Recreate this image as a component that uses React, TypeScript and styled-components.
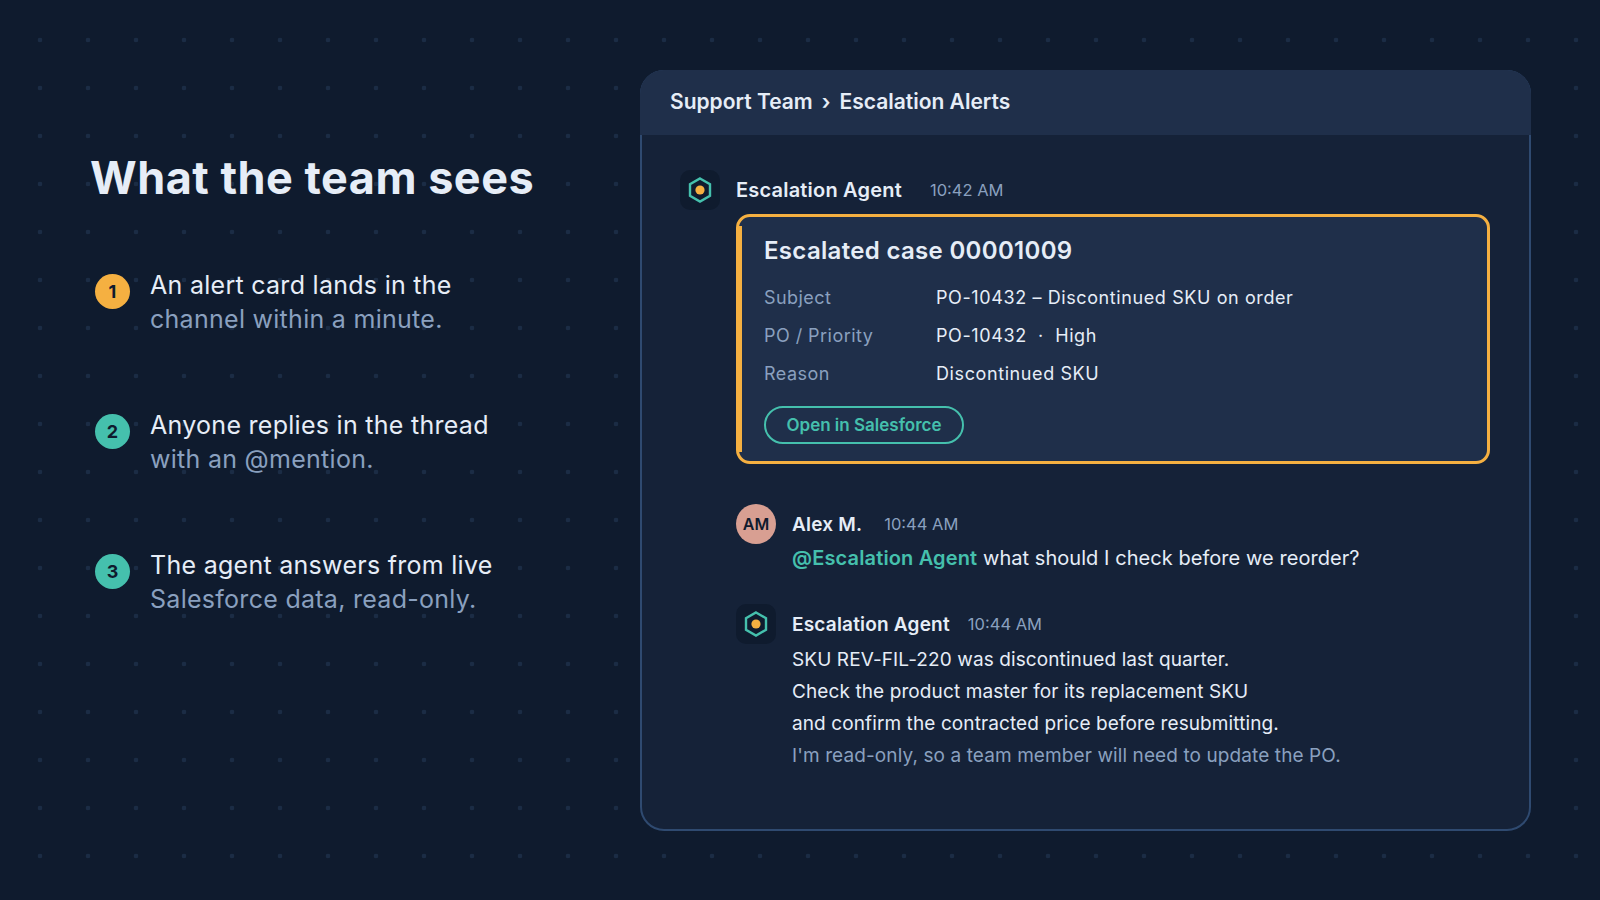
import React from "react";
import styled, { createGlobalStyle } from "styled-components";

const GlobalStyle = createGlobalStyle`
    html, body {
        margin: 0;
        padding: 0;
        background: #0f1b2e;
    }
    body {
        font-family: "Inter", "Noto Sans", sans-serif;
    }
`;

const Page = styled.div`
    width: 1600px;
    height: 900px;
    box-sizing: border-box;
    padding: 70px 69px 69px 0;
    display: flex;
    overflow: hidden;
    background-color: #0f1b2e;
    background-image: radial-gradient(circle at 24px 24px, #1b2c45 2px, transparent 2.6px);
    background-size: 48px 48px;
    background-position: 16px 16px;
`;

const Intro = styled.section`
    width: 640px;
    flex-shrink: 0;
    box-sizing: border-box;
    padding: 79px 0 0 90px;
`;

const Heading = styled.h1`
    margin: 0 0 61px;
    font-size: 45px;
    line-height: 58px;
    font-weight: 700;
    color: #e6edf7;
    letter-spacing: 0.5px;
`;

const Steps = styled.ol`
    list-style: none;
    margin: 0;
    padding: 0;
    display: flex;
    flex-direction: column;
    gap: 72px;
`;

const Step = styled.li`
    display: flex;
    align-items: flex-start;
    gap: 20px;
`;

const Badge = styled.span<{ $color: string }>`
    width: 35px;
    height: 35px;
    margin: 6px 0 0 5px;
    flex-shrink: 0;
    border-radius: 50%;
    background: ${(p) => p.$color};
    color: #0f1b2e;
    font-size: 18px;
    font-weight: 700;
    display: flex;
    align-items: center;
    justify-content: center;
`;

const StepText = styled.p`
    margin: 0;
    font-size: 25px;
    line-height: 34px;
    color: #e6edf7;
    letter-spacing: 0.28px;
`;

const Muted = styled.span`
    display: block;
    color: #8aa0bf;
`;

const Panel = styled.section`
    flex: 1;
    box-sizing: border-box;
    background: #152238;
    border: 2px solid #2f4a70;
    border-radius: 24px;
`;

const PanelHeader = styled.header`
    height: 65px;
    margin: -2px -2px 0;
    padding: 0 30px 2px;
    box-sizing: border-box;
    display: flex;
    align-items: center;
    gap: 9px;
    background: #1f2f4a;
    border-radius: 24px 24px 0 0;
    color: #e6edf7;
    font-size: 21px;
    font-weight: 600;
`;

const PanelBody = styled.div`
    padding: 35px 39px 0 38px;
    display: flex;
    flex-direction: column;
`;

const Message = styled.article<{ $top?: number; $indent?: number }>`
    display: flex;
    gap: 16px;
    margin-top: ${(p) => p.$top || 0}px;
    margin-left: ${(p) => p.$indent || 0}px;
`;

const AgentAvatar = styled.div`
    width: 40px;
    height: 40px;
    flex-shrink: 0;
    border-radius: 10px;
    background: #0f1b2e;
    display: flex;
    align-items: center;
    justify-content: center;
`;

const PersonAvatar = styled.div`
    width: 40px;
    height: 40px;
    flex-shrink: 0;
    border-radius: 50%;
    background: #d89f92;
    color: #0f1b2e;
    font-size: 16px;
    font-weight: 600;
    display: flex;
    align-items: center;
    justify-content: center;
`;

const MessageMain = styled.div`
    flex: 1;
    min-width: 0;
`;

const MetaRow = styled.div<{ $gap: number }>`
    height: 40px;
    display: flex;
    align-items: center;
    gap: ${(p) => p.$gap}px;
`;

const Name = styled.span<{ $large?: boolean }>`
    font-size: ${(p) => (p.$large ? 20 : 19)}px;
    font-weight: 600;
    color: #e6edf7;
    letter-spacing: 0.2px;
`;

const Time = styled.span`
    font-size: 16.5px;
    color: #8aa0bf;
`;

const AlertCard = styled.div`
    position: relative;
    margin-top: 4px;
    height: 250px;
    box-sizing: border-box;
    padding: 17px 25px;
    background: #1f2f4a;
    border: 3px solid #f5b041;
    border-radius: 14px;

    &::before {
        content: "";
        position: absolute;
        left: 0;
        top: 9px;
        bottom: 9px;
        width: 3px;
        background: #f5b041;
    }
`;

const CardTitle = styled.h2`
    margin: 0 0 10px;
    font-size: 24px;
    line-height: 34px;
    font-weight: 600;
    color: #e6edf7;
    letter-spacing: 0.32px;
`;

const FactRow = styled.div`
    height: 38px;
    display: flex;
    align-items: center;
    font-size: 18px;
`;

const FactLabel = styled.span`
    width: 172px;
    color: #8aa0bf;
    letter-spacing: 0.45px;
`;

const FactValue = styled.span`
    color: #e6edf7;
    letter-spacing: 0.6px;
`;

const OutlineButton = styled.button`
    margin-top: 14px;
    width: 200px;
    height: 38px;
    padding: 0;
    background: transparent;
    border: 2px solid #45c0ad;
    border-radius: 19px;
    color: #45c0ad;
    font-family: inherit;
    font-size: 17px;
    font-weight: 600;
`;

const Line = styled.p<{ $muted?: boolean }>`
    margin: 0;
    font-size: 19px;
    line-height: 32px;
    letter-spacing: 0.1px;
    color: ${(p) => (p.$muted ? "#8aa0bf" : "#e6edf7")};
`;

const MentionLine = styled(Line)`
    margin-top: -2px;
    font-size: 20px;
    letter-spacing: 0.05px;
`;

const Mention = styled.span`
    color: #45c0ad;
    font-weight: 600;
    letter-spacing: 0.15px;
`;

function HexIcon() {
    return (
        <svg width="24" height="26" viewBox="0 0 24 26" fill="none">
            <polygon points="12,1.5 22,7.2 22,18.8 12,24.5 2,18.8 2,7.2" stroke="#45c0ad" strokeWidth="2.4" />
            <circle cx="12" cy="13" r="4.6" fill="#f5b041" />
        </svg>
    );
}

const stepList = [
    { color: "#f5b041", first: "An alert card lands in the", second: "channel within a minute." },
    { color: "#45c0ad", first: "Anyone replies in the thread", second: "with an @mention." },
    { color: "#45c0ad", first: "The agent answers from live", second: "Salesforce data, read-only." },
];

export default function App() {
    return (
        <Page>
            <GlobalStyle />
            <Intro>
                <Heading>What the team sees</Heading>
                <Steps>
                    {stepList.map((step, i) => (
                        <Step key={step.first}>
                            <Badge $color={step.color}>{i + 1}</Badge>
                            <StepText>
                                {step.first}
                                <Muted>{step.second}</Muted>
                            </StepText>
                        </Step>
                    ))}
                </Steps>
            </Intro>
            <Panel>
                <PanelHeader>
                    <span>Support Team</span>
                    <span>›</span>
                    <span>Escalation Alerts</span>
                </PanelHeader>
                <PanelBody>
                    <Message>
                        <AgentAvatar><HexIcon /></AgentAvatar>
                        <MessageMain>
                            <MetaRow $gap={28}>
                                <Name $large>Escalation Agent</Name>
                                <Time>10:42 AM</Time>
                            </MetaRow>
                            <AlertCard>
                                <CardTitle>Escalated case 00001009</CardTitle>
                                <FactRow><FactLabel>Subject</FactLabel><FactValue>PO-10432 – Discontinued SKU on order</FactValue></FactRow>
                                <FactRow><FactLabel>PO / Priority</FactLabel><FactValue>PO-10432 &nbsp;·&nbsp; High</FactValue></FactRow>
                                <FactRow><FactLabel>Reason</FactLabel><FactValue>Discontinued SKU</FactValue></FactRow>
                                <OutlineButton>Open in Salesforce</OutlineButton>
                            </AlertCard>
                        </MessageMain>
                    </Message>
                    <Message $top={40} $indent={56}>
                        <PersonAvatar>AM</PersonAvatar>
                        <MessageMain>
                            <MetaRow $gap={22}>
                                <Name>Alex M.</Name>
                                <Time>10:44 AM</Time>
                            </MetaRow>
                            <MentionLine><Mention>@Escalation Agent</Mention> what should I check before we reorder?</MentionLine>
                        </MessageMain>
                    </Message>
                    <Message $top={30} $indent={56}>
                        <AgentAvatar><HexIcon /></AgentAvatar>
                        <MessageMain>
                            <MetaRow $gap={18}>
                                <Name>Escalation Agent</Name>
                                <Time>10:44 AM</Time>
                            </MetaRow>
                            <Line>SKU REV-FIL-220 was discontinued last quarter.</Line>
                            <Line>Check the product master for its replacement SKU</Line>
                            <Line>and confirm the contracted price before resubmitting.</Line>
                            <Line $muted>I'm read-only, so a team member will need to update the PO.</Line>
                        </MessageMain>
                    </Message>
                </PanelBody>
            </Panel>
        </Page>
    );
}
